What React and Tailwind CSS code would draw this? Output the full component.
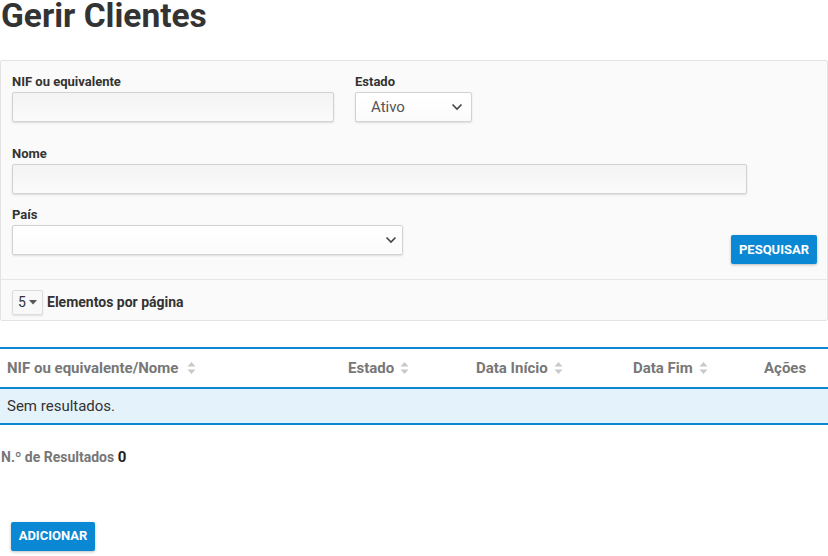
import React from "react";

function Chevron() {
  return (
    <svg width="12" height="8" viewBox="0 0 12 8" fill="none">
      <path d="M1.5 1.5 L6 6 L10.5 1.5" stroke="#444" strokeWidth="1.6" />
    </svg>
  );
}

function Sort() {
  return (
    <svg width="9" height="14" viewBox="0 0 9 14" className="ml-[6px]">
      <path d="M4.5 1 L8.5 5.5 H0.5 Z" fill="#c8c8c8" />
      <path d="M4.5 13 L8.5 8.5 H0.5 Z" fill="#c8c8c8" />
    </svg>
  );
}

const inputCls =
  "h-[30px] rounded-[2px] border border-[#d2d2d2] bg-gradient-to-b from-[#f3f3f3] to-[#fbfbfb] shadow-[0_1px_2px_rgba(0,0,0,0.12)]";

const labelCls = "text-[13px] leading-[16px] font-bold mb-[2px]";

export default function App() {
  return (
    <div className="w-[828px] h-[556px] bg-white text-[#333] overflow-hidden" style={{ fontFamily: "Roboto, 'Liberation Sans', sans-serif" }}>
      <h1 className="text-[33.5px] leading-[32px] font-bold text-[#333] pl-[1px]">Gerir Clientes</h1>

      <div className="mt-[28px] w-[828px] border border-[#e3e3e3] bg-[#fafafa] rounded-[2px]">
        <div className="pl-[11px] pr-[10px] pt-[13px] pb-[24px]">
          <div className="flex">
            <div className="w-[322px]">
              <div className={labelCls}>NIF ou equivalente</div>
              <div className={inputCls + " w-[322px]"}></div>
            </div>
            <div className="ml-[21px]">
              <div className={labelCls}>Estado</div>
              <div className={inputCls + " w-[117px] flex items-center justify-between pl-[15px] pr-[8px] from-white to-[#f7f7f7]"}>
                <span className="text-[15px] text-[#555]">Ativo</span>
                <Chevron />
              </div>
            </div>
          </div>

          <div className="mt-[24px]">
            <div className={labelCls}>Nome</div>
            <div className={inputCls + " w-[735px]"}></div>
          </div>

          <div className="mt-[13px] flex items-end justify-between">
            <div>
              <div className={labelCls}>País</div>
              <div className={inputCls + " w-[391px] flex items-center justify-end pr-[5px] from-white to-[#f7f7f7]"}>
                <Chevron />
              </div>
            </div>
            <button className="h-[29px] w-[86px] mb-[-9px] rounded-[2px] bg-[#0a88d4] text-white text-[13px] font-bold shadow-[0_1px_3px_rgba(0,0,0,0.25)]">
              PESQUISAR
            </button>
          </div>
        </div>
        <div className="border-t border-[#e6e6e6] h-[41px] flex items-center pl-[11px] pt-[5px]">
          <div className="h-[25px] w-[31px] rounded-[2px] border border-[#dcdcdc] bg-[#f8f8f8] shadow-[0_1px_2px_rgba(0,0,0,0.1)] flex items-center justify-center gap-[3px] text-[14px]">
            <span>5</span>
            <svg width="8" height="5" viewBox="0 0 8 5"><path d="M0 0 H8 L4 4.5 Z" fill="#555" /></svg>
          </div>
          <span className="ml-[4px] text-[14px] font-bold">Elementos por página</span>
        </div>
      </div>

      <div className="mt-[26px] w-[828px]">
        <div className="h-[2px] bg-[#0d86d2]"></div>
        <div className="flex items-center h-[38px] text-[15px] font-bold text-[#777]">
          <div className="w-[341px] pl-[7px] flex items-center">NIF ou equivalente/Nome<span className="ml-[3px] flex"><Sort /></span></div>
          <div className="w-[128px] pl-[7px] flex items-center">Estado<Sort /></div>
          <div className="w-[157px] pl-[7px] flex items-center">Data Início<Sort /></div>
          <div className="w-[131px] pl-[7px] flex items-center">Data Fim<Sort /></div>
          <div className="pl-[7px]">Ações</div>
        </div>
        <div className="h-[2px] bg-[#0d86d2]"></div>
        <div className="h-[34px] bg-[#e4f2fb] flex items-center pl-[7px] text-[15px] text-[#333]">Sem resultados.</div>
        <div className="h-[2px] bg-[#0d86d2]"></div>
      </div>

      <div className="mt-[21px] pl-[1px] text-[14px] font-bold text-[#777]">
        N.º de Resultados <span className="text-[#222] text-[15px]">0</span>
      </div>

      <button className="ml-[11px] mt-[53px] h-[29px] w-[84px] rounded-[2px] bg-[#0a88d4] text-white text-[13px] font-bold shadow-[0_1px_3px_rgba(0,0,0,0.25)]">
        ADICIONAR
      </button>
    </div>
  );
}
